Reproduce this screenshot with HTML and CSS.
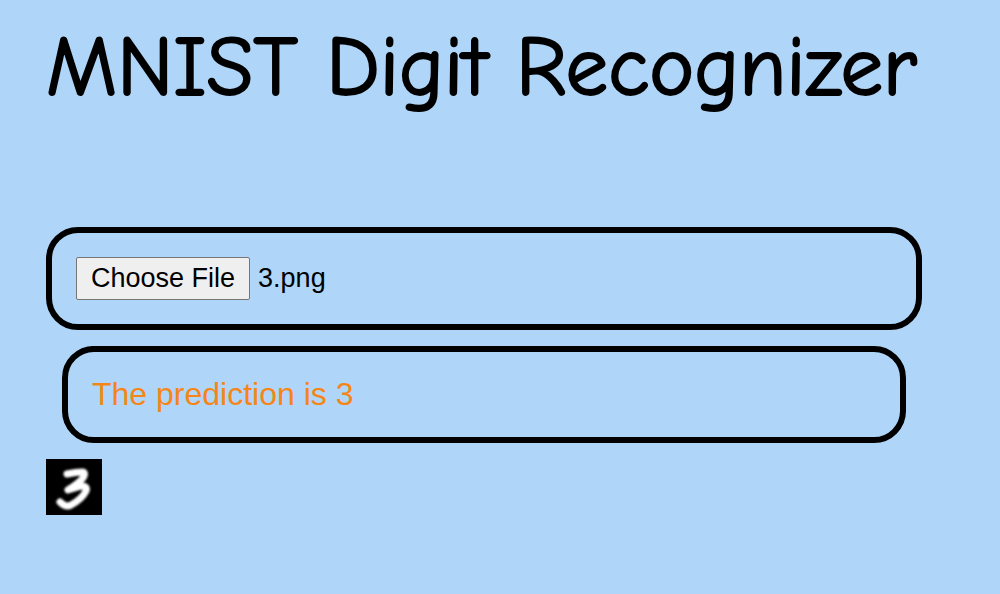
FILE: index.html
```html
<!DOCTYPE html>
<html lang="en">
<head>
<meta charset="utf-8">
<title>MNIST Digit Recognizer</title>
<meta name="viewport" content="width=device-width, initial-scale=1">
<link rel="stylesheet" href="styles.css">
</head>
<body>
<main class="page">
  <h1 class="title">MNIST Digit Recognizer</h1>
  <div class="panel upload">
    <input class="file" id="digit-file" type="file" accept="image/*" aria-label="Digit image">
  </div>
  <div class="panel result">
    <p class="prediction">The prediction is 3</p>
  </div>
  <svg class="preview" viewBox="0 0 56 56" role="img" aria-label="Handwritten digit 3">
    <rect width="56" height="56" fill="#000"/>
    <path class="stroke" d="M21 15 Q30 13 37 13 Q40 14 37 19 Q34 23 22 31 Q29 29 35 27 Q42 27 40 32 Q36 40 25 46 Q20 49 14 43"/>
  </svg>
</main>
<script src="script.js"></script>
</body>
</html>
```

FILE: styles.css
```css
body {
  margin: 0;
  background: #afd6f8;
  color: #000;
  font-family: Arial, "Liberation Sans", sans-serif;
}

.page {
  padding: 16px 78px 32px 46px;
}

.title {
  margin: 0 0 108px;
  font-family: "Comic Sans MS", "Comic Neue", "Open Sans", sans-serif;
  font-size: 85px;
  font-weight: 400;
  line-height: 103px;
  white-space: nowrap;
  -webkit-text-stroke: 2px #000;
}

.panel {
  padding: 24px;
  border: 6px solid #000;
  border-radius: 32px;
}

.file {
  display: block;
  width: 100%;
  font: 27px/31px Arial, "Liberation Sans", sans-serif;
}

.file::file-selector-button {
  margin: 0 8px 0 0;
  padding: 5px 14px;
  border: 1px solid #767676;
  border-radius: 2px;
  background: #efefef;
  color: #000;
  font: inherit;
}

.result {
  margin: 16px;
}

.prediction {
  margin: 0;
  color: #f58516;
  font-size: 32px;
  line-height: 37px;
}

.preview {
  display: block;
  width: 56px;
  height: 56px;
}

.stroke {
  fill: none;
  stroke: #fff;
  stroke-width: 7;
  stroke-linecap: round;
  stroke-linejoin: round;
  filter: blur(1px);
}
```

FILE: script.js
```js
const input = document.getElementById("digit-file");
const transfer = new DataTransfer();
transfer.items.add(new File([], "3.png", { type: "image/png" }));
input.files = transfer.files;
```
